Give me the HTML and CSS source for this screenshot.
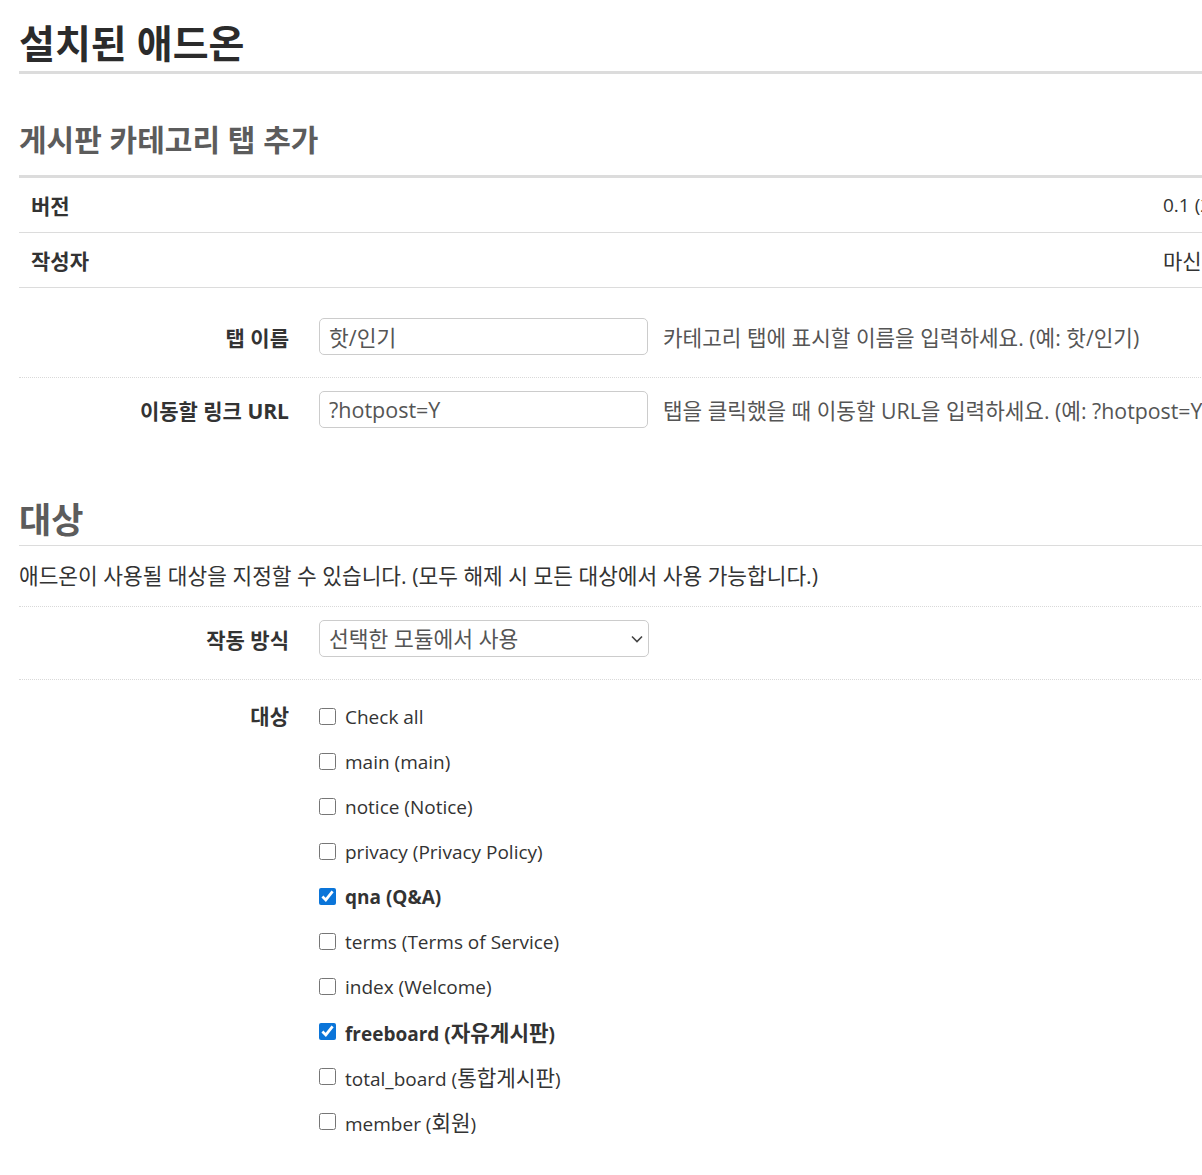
FILE: index.html
```html
<!DOCTYPE html>
<html lang="ko">
<head>
    <meta charset="UTF-8">
    <title>설치된 애드온</title>
    <link rel="stylesheet" href="styles.css">
</head>
<body>
    <div class="page">
        <h1>설치된 애드온</h1>
        <h2 class="addon-title">게시판 카테고리 탭 추가</h2>
        <table class="info">
            <tr>
                <th>버전</th>
                <td>0.1 (2024-01-01)</td>
            </tr>
            <tr>
                <th>작성자</th>
                <td class="ko">마신</td>
            </tr>
        </table>
        <form class="form">
            <div class="row">
                <label class="label" for="tabName">탭 이름</label>
                <div class="control">
                    <input type="text" id="tabName" value="핫/인기">
                    <span class="help">카테고리 탭에 표시할 이름을 입력하세요. (예: 핫/인기)</span>
                </div>
            </div>
            <div class="row">
                <label class="label" for="tabUrl">이동할 링크 URL</label>
                <div class="control">
                    <input type="text" id="tabUrl" value="?hotpost=Y">
                    <span class="help">탭을 클릭했을 때 이동할 URL을 입력하세요. (예: ?hotpost=Y 또는 전체 URL)</span>
                </div>
            </div>

            <h2 class="section-title">대상</h2>
            <p class="desc">애드온이 사용될 대상을 지정할 수 있습니다. (모두 해제 시 모든 대상에서 사용 가능합니다.)</p>
            <div class="row">
                <label class="label" for="mode">작동 방식</label>
                <div class="control">
                    <div class="select-wrap">
                        <select id="mode">
                            <option>선택한 모듈에서 사용</option>
                            <option>선택한 모듈에서 사용하지 않음</option>
                        </select>
                        <svg class="chevron" viewBox="0 0 12 8" width="12" height="8"><path d="M1 1.5l5 5 5-5" fill="none" stroke="#444" stroke-width="1.6"/></svg>
                    </div>
                </div>
            </div>
            <div class="row targets">
                <span class="label">대상</span>
                <div class="checks">
                    <label class="check"><input type="checkbox"> Check all</label>
                    <label class="check"><input type="checkbox"> main (main)</label>
                    <label class="check"><input type="checkbox"> notice (Notice)</label>
                    <label class="check"><input type="checkbox"> privacy (Privacy Policy)</label>
                    <label class="check on"><input type="checkbox" checked> qna (Q&amp;A)</label>
                    <label class="check"><input type="checkbox"> terms (Terms of Service)</label>
                    <label class="check"><input type="checkbox"> index (Welcome)</label>
                    <label class="check on"><input type="checkbox" checked> <span>freeboard (<span class="ko">자유게시판</span>)</span></label>
                    <label class="check"><input type="checkbox"> <span>total_board (<span class="ko">통합게시판</span>)</span></label>
                    <label class="check"><input type="checkbox"> <span>member (<span class="ko">회원</span>)</span></label>
                </div>
            </div>
        </form>
    </div>
</body>
</html>
```

FILE: styles.css
```css
:root {
    --text: #333;
    --muted: #555;
    --heading: #5c5c5c;
    --line: #dcdcdc;
    --dotted: #d9d9d9;
    --font: "Open Sans", "Noto Sans CJK KR", sans-serif;
}
html, body {
    overflow: hidden;
}
body {
    margin: 0;
    padding: 0 0 0 19px;
    font-family: var(--font);
    font-size: 19.5px;
    color: var(--text);
    background: #fff;
}
.page {
    width: 1420px;
}
.ko {
    font-size: 1.12em;
}
h1 {
    margin: 0;
    padding: 18px 0 3px;
    font-size: 39px;
    line-height: 50px;
    font-weight: 700;
    color: #2b2b2b;
    border-bottom: 3px solid var(--line);
}
.addon-title {
    margin: 46px 0 0;
    padding-bottom: 15px;
    font-size: 30px;
    line-height: 40px;
    font-weight: 700;
    color: var(--heading);
    border-bottom: 3px solid var(--line);
}
.info {
    width: 100%;
    border-collapse: collapse;
}
.info th, .info td {
    height: 54px;
    padding: 0 12px;
    border-bottom: 1px solid var(--line);
    font-size: 19px;
    text-align: left;
    vertical-align: middle;
}
.info th {
    width: 1120px;
    font-size: 21px;
    font-weight: 700;
}
.info td {
    padding-left: 0;
}
.info td.ko {
    font-size: 21px;
}
.form {
    padding-top: 17px;
}
.row {
    display: grid;
    grid-template-columns: 270px 1fr;
    column-gap: 30px;
    align-items: center;
    padding: 13px 0 22px;
}
.row + .row, .desc + .row {
    border-top: 1px dotted var(--dotted);
}
.label {
    text-align: right;
    font-weight: 700;
    font-size: 21px;
    color: var(--text);
}
.control {
    display: flex;
    align-items: center;
    gap: 15px;
    white-space: nowrap;
}
input[type="text"], select {
    box-sizing: border-box;
    width: 329px;
    height: 37px;
    padding: 0 9px;
    border: 1px solid #ccc;
    border-radius: 5px;
    font-family: var(--font);
    font-size: 21.5px;
    color: var(--muted);
    background: #fff;
}
.help {
    color: var(--muted);
    font-size: 21.3px;
}
.section-title {
    margin: 47px 0 0;
    padding-bottom: 2px;
    font-size: 35px;
    line-height: 46px;
    font-weight: 700;
    color: var(--heading);
    border-bottom: 1px solid var(--line);
}
.desc {
    margin: 15px 0 0;
    padding-bottom: 15px;
    line-height: 30px;
    font-size: 21.4px;
}
.select-wrap {
    position: relative;
}
select {
    appearance: none;
    -webkit-appearance: none;
    width: 330px;
}
.chevron {
    position: absolute;
    right: 6px;
    top: 15px;
}
.targets {
    align-items: start;
    padding-top: 14px;
}
.targets .label {
    line-height: 45px;
}
.checks {
    display: flex;
    flex-direction: column;
}
.check {
    display: flex;
    align-items: center;
    gap: 9px;
    height: 45px;
    font-size: 19px;
    color: var(--text);
}
.check.on {
    font-weight: 700;
}
.check input {
    width: 17px;
    height: 17px;
    margin: 0;
    accent-color: #0b75d9;
}
```
